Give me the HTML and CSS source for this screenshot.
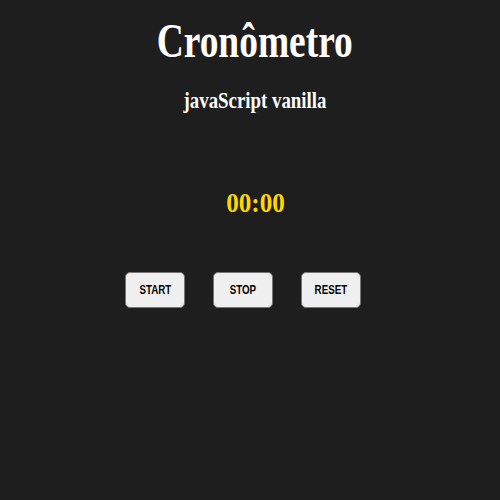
FILE: index.html
```html
<!DOCTYPE html>
<html lang="pt">
<head>
<meta charset="utf-8">
<title>Cronômetro</title>
<link rel="stylesheet" href="styles.css">
</head>
<body>
<main class="app">
  <h1 class="title">Cronômetro</h1>
  <h2 class="subtitle">javaScript vanilla</h2>
  <div class="timer">00:00</div>
  <div class="controls">
    <button class="btn"><span class="btn-label">START</span></button>
    <button class="btn"><span class="btn-label">STOP</span></button>
    <button class="btn"><span class="btn-label">RESET</span></button>
  </div>
</main>
</body>
</html>
```
FILE: styles.css
```css
html, body {
  margin: 0;
  padding: 0;
  background: #1e1e1e;
  height: 100%;
}
.app {
  display: flex;
  flex-direction: column;
  align-items: center;
  padding-left: 10px;
  font-family: "Liberation Serif", "Times New Roman", serif;
  color: #ffffff;
}
.title {
  margin: 15px 0 0;
  font-size: 48px;
  line-height: 52px;
  font-weight: bold;
  transform: scaleX(0.78);
}
.subtitle {
  margin: 19px 0 0;
  font-size: 24px;
  line-height: 28px;
  font-weight: bold;
  transform: scaleX(0.785);
}
.timer {
  margin-top: 74px;
  font-size: 27px;
  line-height: 30px;
  font-weight: bold;
  color: #ffd700;
  transform: scaleX(0.93);
}
.controls {
  display: flex;
  gap: 28px;
  margin-top: 54px;
  padding-right: 24px;
}
.btn {
  width: 60px;
  height: 36px;
  padding: 0;
  background: #efefef;
  border: 1px solid #767676;
  border-radius: 5px;
  font-family: "Liberation Sans", Arial, sans-serif;
  font-weight: bold;
  font-size: 12.5px;
  color: #000;
}
.btn-label {
  display: inline-block;
  transform: scaleX(0.78);
}
```
